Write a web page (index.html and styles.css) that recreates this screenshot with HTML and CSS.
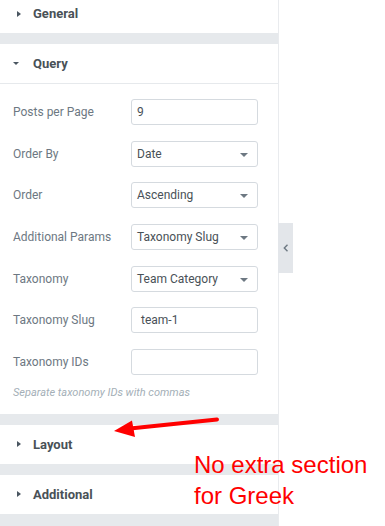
FILE: index.html
```html
<!DOCTYPE html>
<html lang="en">
<head>
  <meta charset="UTF-8">
  <meta name="viewport" content="width=device-width, initial-scale=1.0">
  <title>Query settings</title>
  <link rel="stylesheet" href="styles.css">
</head>
<body>
  <div class="page">
    <div class="panel">

      <!-- General -->
      <section class="section">
        <div class="section-head"><span class="caret-box"><span class="caret-right"></span></span>General</div>
      </section>

      <!-- Query -->
      <section class="section">
        <div class="section-head open"><span class="caret-box"><span class="caret-down"></span></span>Query</div>
        <div class="section-body">
          <div class="control">
            <label>Posts per Page</label>
            <div class="field">9</div>
          </div>
          <div class="control">
            <label>Order By</label>
            <div class="field select">Date</div>
          </div>
          <div class="control">
            <label>Order</label>
            <div class="field select">Ascending</div>
          </div>
          <div class="control">
            <label>Additional Params</label>
            <div class="field select">Taxonomy Slug</div>
          </div>
          <div class="control">
            <label>Taxonomy</label>
            <div class="field select">Team Category</div>
          </div>
          <div class="control">
            <label>Taxonomy Slug</label>
            <div class="field field-wide">team-1</div>
          </div>
          <div class="control">
            <label>Taxonomy IDs</label>
            <div class="field"></div>
          </div>
          <p class="help">Separate taxonomy IDs with commas</p>
        </div>
      </section>

      <!-- Layout -->
      <section class="section">
        <div class="section-head"><span class="caret-box"><span class="caret-right"></span></span>Layout</div>
      </section>

      <!-- Additional -->
      <section class="section">
        <div class="section-head"><span class="caret-box"><span class="caret-right"></span></span>Additional</div>
      </section>
    </div>

    <div class="collapse-tab">
      <svg width="6" height="8" viewBox="0 0 6 8"><path d="M4.5 0.8 L1.3 4 L4.5 7.2" fill="none" stroke="#6d7882" stroke-width="1.4"/></svg>
    </div>

    <svg class="arrow" width="385" height="526" viewBox="0 0 385 526">
      <path d="M217 419.5 L130 428.5" stroke="#ff0000" stroke-width="4" stroke-linecap="round"/>
      <polygon points="114,431 132,420.5 135,437" fill="#ff0000"/>
    </svg>

    <div class="note">No extra section<br>for Greek</div>
  </div>
</body>
</html>
```

FILE: styles.css
```css
body {
  margin: 0;
  background: #fff;
  font-family: Roboto, "Liberation Sans", Arial, sans-serif;
}
.page {
  position: relative;
  width: 385px;
  height: 526px;
  overflow: hidden;
}
.panel {
  width: 278px;
  height: 540px;
  margin-top: -6px;
  background: #e6e9ec;
  border-right: 1px solid #e9ebee;
  display: flex;
  flex-direction: column;
  gap: 11px;
}
.section {
  background: #fff;
}
.section-head {
  height: 39px;
  display: flex;
  align-items: center;
  padding-left: 13px;
  font-size: 13px;
  font-weight: bold;
  color: #495157;
}
.section-head.open {
  border-bottom: 1px solid #e6e9ec;
}
.caret-box {
  width: 20px;
  display: flex;
  align-items: center;
}
.caret-right {
  margin-left: 4px;
  border-left: 4px solid #4a5661;
  border-top: 3.5px solid transparent;
  border-bottom: 3.5px solid transparent;
}
.caret-down {
  border-top: 3.5px solid #4a5661;
  border-left: 3.5px solid transparent;
  border-right: 3.5px solid transparent;
}
.section-body {
  padding: 15px 20px 15px 13px;
  display: flex;
  flex-direction: column;
  gap: 15.67px;
}
.control {
  display: flex;
  align-items: center;
}
.control label {
  width: 118px;
  font-size: 12px;
  color: #6d7882;
}
.field {
  box-sizing: border-box;
  width: 127px;
  height: 26px;
  border: 1px solid #d5dadf;
  border-radius: 3px;
  padding-left: 5px;
  display: flex;
  align-items: center;
  font-size: 12px;
  color: #495157;
  position: relative;
}
.field-wide {
  padding-left: 9px;
}
.select::after {
  content: "";
  position: absolute;
  right: 9px;
  top: 11px;
  border-top: 4px solid #6d7882;
  border-left: 4px solid transparent;
  border-right: 4px solid transparent;
}
.help {
  margin: -5px 0 0;
  font-size: 11px;
  font-style: italic;
  color: #a4afb7;
}
.collapse-tab {
  position: absolute;
  left: 278px;
  top: 223px;
  width: 15px;
  height: 50px;
  background: #e3e6ea;
  display: flex;
  align-items: center;
  justify-content: center;
}
.arrow {
  position: absolute;
  left: 0;
  top: 0;
}
.note {
  position: absolute;
  left: 194px;
  top: 449px;
  font-family: "Liberation Sans", Arial, sans-serif;
  font-size: 24px;
  line-height: 31px;
  color: #ff0000;
}
```
